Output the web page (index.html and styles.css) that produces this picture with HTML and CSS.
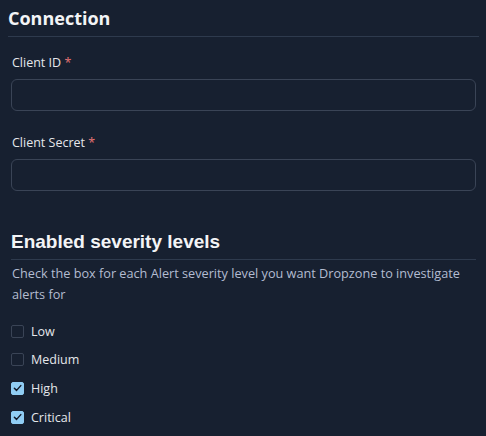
FILE: index.html
```html
<!DOCTYPE html>
<html lang="en">
<head>
<meta charset="utf-8">
<title>Connection</title>
<link rel="stylesheet" href="styles.css">
</head>
<body>
<div class="page">
  <section class="section">
    <h2 class="section-title">Connection</h2>
    <div class="fields">
      <div class="field">
        <label class="field-label" for="client-id">Client ID <span class="req">*</span></label>
        <input class="field-input" id="client-id" type="text">
      </div>
      <div class="field">
        <label class="field-label" for="client-secret">Client Secret <span class="req">*</span></label>
        <input class="field-input" id="client-secret" type="text">
      </div>
    </div>
  </section>
  <section class="severity">
    <h2 class="severity-title">Enabled severity levels</h2>
    <p class="severity-desc">Check the box for each Alert severity level you want Dropzone to investigate alerts for</p>
    <ul class="checks">
      <li class="check"><span class="box"></span><span class="check-label">Low</span></li>
      <li class="check"><span class="box"></span><span class="check-label">Medium</span></li>
      <li class="check"><span class="box on"><svg viewBox="0 0 12 12" width="12" height="12"><path d="M2.6 6.2 L5 8.6 L9.6 3.4" fill="none" stroke="#111827" stroke-width="1.6" stroke-linecap="round" stroke-linejoin="round"/></svg></span><span class="check-label">High</span></li>
      <li class="check"><span class="box on"><svg viewBox="0 0 12 12" width="12" height="12"><path d="M2.6 6.2 L5 8.6 L9.6 3.4" fill="none" stroke="#111827" stroke-width="1.6" stroke-linecap="round" stroke-linejoin="round"/></svg></span><span class="check-label">Critical</span></li>
    </ul>
  </section>
</div>
</body>
</html>
```
FILE: styles.css
```css
html, body {
  margin: 0;
  padding: 0;
  background: #172030;
}
body {
  font-family: "Open Sans", "Noto Sans", sans-serif;
  color: #e5e7eb;
}
.page {
  padding: 6px 7px 0 8px;
}
.section-title {
  margin: 0;
  font-size: 18px;
  line-height: 24px;
  font-weight: 700;
  color: #f3f4f6;
  padding-bottom: 6px;
  border-bottom: 1px solid #2e3a4d;
}
.fields {
  padding: 0 3px;
  display: flex;
  flex-direction: column;
}
.field {
  display: flex;
  flex-direction: column;
}
.field + .field {
  margin-top: 6px;
}
.field-label {
  font-size: 12.5px;
  line-height: 16px;
  margin-top: 18px;
  margin-bottom: 8px;
  padding-left: 1px;
  color: #e5e7eb;
}
.req {
  color: #e57373;
}
.field-input {
  box-sizing: border-box;
  height: 32px;
  margin: 0;
  border: 1px solid #3a4456;
  border-radius: 6px;
  background: transparent;
  color: #e5e7eb;
  padding: 0 10px;
  font: inherit;
  outline: none;
}
.severity {
  padding: 0 3px;
  margin-top: 39px;
}
.severity-title {
  margin: 0;
  font-family: "Liberation Sans", Arial, sans-serif;
  font-size: 19px;
  line-height: 24px;
  font-weight: 700;
  color: #f3f4f6;
  padding-bottom: 5px;
  border-bottom: 1px solid #2e3a4d;
}
.severity-desc {
  margin: 3px 0 0;
  font-size: 12.7px;
  line-height: 21px;
  color: #b3bcd0;
  padding-left: 1px;
}
.checks {
  list-style: none;
  margin: 17px 0 0;
  padding: 0;
  display: flex;
  flex-direction: column;
  gap: 10.7px;
}
.check {
  display: flex;
  align-items: center;
  gap: 7px;
  height: 18px;
}
.box {
  box-sizing: border-box;
  width: 13px;
  height: 13px;
  border: 1px solid #3a4456;
  border-radius: 2px;
  display: flex;
  align-items: center;
  justify-content: center;
}
.box.on {
  background: #90cdf4;
  border-color: #90cdf4;
}
.box svg {
  display: block;
}
.check-label {
  font-size: 12.5px;
  color: #e5e7eb;
}
```
